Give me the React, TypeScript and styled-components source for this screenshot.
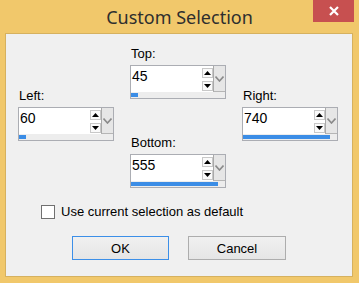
import React from "react";
import styled, { createGlobalStyle } from "styled-components";

const Global = createGlobalStyle`
  html, body { margin: 0; padding: 0; background: #f1c86b; }
  body { width: 359px; height: 283px; overflow: hidden; }
  * { box-sizing: border-box; }
`;

const Window = styled.div`
  width: 359px;
  height: 283px;
  display: flex;
  flex-direction: column;
  background: #f1c86b;
`;

const TitleBar = styled.div`
  height: 33px;
  display: grid;
  grid-template-columns: 1fr auto 1fr;
  align-items: start;
`;

const Title = styled.div`
  grid-column: 2;
  font-family: "Noto Sans", "Open Sans", sans-serif;
  font-size: 18px;
  line-height: 24px;
  padding-top: 5px;
  color: #2e2e2e;
  white-space: nowrap;
`;

const CloseButton = styled.div`
  grid-column: 3;
  justify-self: end;
  margin-right: 5px;
  width: 41px;
  height: 22px;
  background: #c75050;
  display: flex;
  align-items: center;
  justify-content: center;
`;

const Panel = styled.div`
  flex: 1;
  margin: 0 6px 6px 5px;
  background: #f0f0f0;
  border: 1px solid #d6b15f;
  display: flex;
  flex-direction: column;
`;

const Fields = styled.div`
  display: flex;
  gap: 16px;
  padding: 12px 0 0 12px;
`;

const Column = styled.div<{ $top?: number }>`
  display: flex;
  flex-direction: column;
  gap: 36px;
  padding-top: ${(p) => p.$top ?? 0}px;
`;

const Group = styled.div`
  display: flex;
  flex-direction: column;
  gap: 3px;
`;

const Label = styled.div`
  font-family: "Liberation Sans", Arial, sans-serif;
  font-size: 13px;
  line-height: 16px;
  color: #000;
  padding-left: 1px;
`;

const SpinField = styled.div`
  width: 96px;
  height: 34px;
  border: 1px solid #abadb3;
  background: #fff;
  display: flex;
  flex-direction: column;
`;

const SpinRow = styled.div`
  display: flex;
  height: 27px;
`;

const ValueText = styled.div`
  flex: 1;
  font-family: "Liberation Sans", Arial, sans-serif;
  font-size: 14px;
  line-height: 16px;
  padding: 2px 0 0 1px;
  color: #000;
`;

const Arrows = styled.div`
  width: 11px;
  display: flex;
  flex-direction: column;
  justify-content: center;
  gap: 3px;
`;

const ArrowButton = styled.div`
  height: 10px;
  border: 1px solid #c8c8c8;
  background: #fafafa;
  display: flex;
  align-items: center;
  justify-content: center;
`;

const Dropdown = styled.div`
  width: 12px;
  background: #e6e6e6;
  border-left: 1px solid #a9a9a9;
  border-bottom: 1px solid #b5b5b5;
  display: flex;
  align-items: center;
  justify-content: center;
`;

const Track = styled.div`
  flex: 1;
  padding: 1px 0 1px 0;
  background: #ededed;
  display: flex;
`;

const Fill = styled.div`
  background: #3b8de6;
  height: 4px;
`;

const CheckRow = styled.div`
  display: flex;
  align-items: center;
  gap: 6px;
  margin: 16px 0 0 35px;
  height: 16px;
`;

const CheckBox = styled.div`
  width: 14px;
  height: 14px;
  border: 1px solid #707070;
  background: #fff;
`;

const CheckLabel = styled.div`
  font-family: "Liberation Sans", Arial, sans-serif;
  font-size: 13px;
  line-height: 16px;
  color: #000;
`;

const Buttons = styled.div`
  display: flex;
  gap: 19px;
  margin: 16px 0 0 66px;
`;

const Button = styled.div<{ $primary?: boolean; $w: number }>`
  width: ${(p) => p.$w}px;
  height: 24px;
  border: 1px solid ${(p) => (p.$primary ? "#3c8fe8" : "#adadad")};
  background: linear-gradient(#f0f0f0, #e5e5e5);
  font-family: "Liberation Sans", Arial, sans-serif;
  font-size: 13px;
  color: #000;
  display: flex;
  align-items: center;
  justify-content: center;
`;

const Spin = ({ label, value, max }: { label: string; value: number; max: number }) => (
  <Group>
    <Label>{label}</Label>
    <SpinField>
      <SpinRow>
        <ValueText>{value}</ValueText>
        <Arrows>
          <ArrowButton>
            <svg width="7" height="4" viewBox="0 0 7 4">
              <polygon points="0,4 3.5,0 7,4" fill="#000" />
            </svg>
          </ArrowButton>
          <ArrowButton>
            <svg width="7" height="4" viewBox="0 0 7 4">
              <polygon points="0,0 3.5,4 7,0" fill="#000" />
            </svg>
          </ArrowButton>
        </Arrows>
        <Dropdown>
          <svg width="9" height="6" viewBox="0 0 9 6">
            <polyline points="0.5,0.5 4.5,5 8.5,0.5" fill="none" stroke="#8a8a8a" strokeWidth="1.6" />
          </svg>
        </Dropdown>
      </SpinRow>
      <Track>
        <Fill style={{ width: `${(value / max) * 100}%` }} />
      </Track>
    </SpinField>
  </Group>
);

export default function App() {
  return (
    <Window>
      <Global />
      <TitleBar>
        <Title>Custom Selection</Title>
        <CloseButton>
          <svg width="10" height="10" viewBox="0 0 10 10">
            <path d="M1 1 L9 9 M9 1 L1 9" stroke="#fff" strokeWidth="2.2" />
          </svg>
        </CloseButton>
      </TitleBar>
      <Panel>
        <Fields>
          <Column $top={42}>
            <Spin label="Left:" value={60} max={800} />
          </Column>
          <Column>
            <Spin label="Top:" value={45} max={600} />
            <Spin label="Bottom:" value={555} max={600} />
          </Column>
          <Column $top={42}>
            <Spin label="Right:" value={740} max={800} />
          </Column>
        </Fields>
        <CheckRow>
          <CheckBox />
          <CheckLabel>Use current selection as default</CheckLabel>
        </CheckRow>
        <Buttons>
          <Button $primary $w={97}>OK</Button>
          <Button $w={98}>Cancel</Button>
        </Buttons>
      </Panel>
    </Window>
  );
}
